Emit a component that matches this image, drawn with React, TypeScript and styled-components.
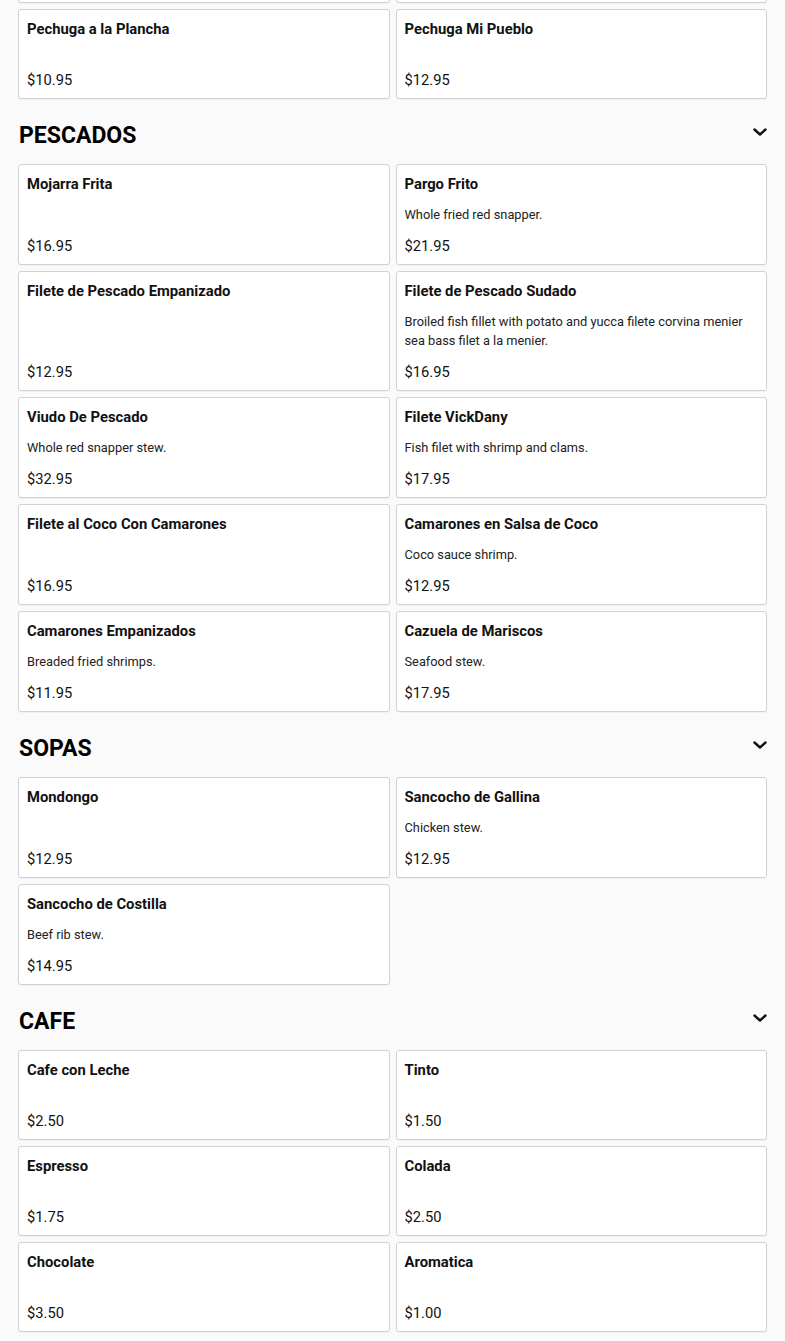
import React from 'react';
import styled, { createGlobalStyle } from 'styled-components';

const GlobalStyle = createGlobalStyle`
  html, body {
    margin: 0;
    padding: 0;
    background: #fafafa;
    font-family: Roboto, 'Liberation Sans', Arial, sans-serif;
    color: #111;
  }
  * {
    box-sizing: border-box;
  }
`;

const Page = styled.div`
  padding: 0 18px 20px;
  overflow: hidden;
`;

const Section = styled.section`
  display: flex;
  flex-direction: column;
`;

const SectionHeader = styled.div`
  display: flex;
  align-items: center;
  justify-content: space-between;
  height: 28px;
  margin: 23px 0 14px;
  padding-left: 1px;
`;

const SectionTitle = styled.h2`
  margin: 0;
  font-size: 23px;
  line-height: 28px;
  font-weight: 700;
  color: #000;
`;

const Chevron = styled.svg`
  width: 16px;
  height: 16px;
  margin-top: -8px;
  margin-right: -1px;
`;

const Grid = styled.div<{ $cut?: boolean }>`
  display: grid;
  grid-template-columns: 1fr 1fr;
  column-gap: 6px;
  row-gap: 6px;
  margin-top: ${(p) => (p.$cut ? '-87px' : '0')};
`;

const Card = styled.div<{ $blank?: boolean }>`
  display: flex;
  flex-direction: column;
  min-height: ${(p) => (p.$blank ? '90px' : '0')};
  padding: 9px 8px 8px;
  background: #fff;
  border: 1px solid #d2d2d2;
  border-radius: 3px;
  box-shadow: 0 1px 1px rgba(0, 0, 0, 0.04);
`;

const ItemName = styled.div`
  font-size: 14.8px;
  line-height: 20px;
  font-weight: 700;
  color: #111;
`;

const ItemDesc = styled.p`
  margin: 11px 0 12px;
  min-height: 8px;
  font-size: 12.8px;
  line-height: 19px;
  color: #222;
`;

const ItemPrice = styled.div`
  margin-top: auto;
  font-size: 14.7px;
  line-height: 20px;
  color: #111;
`;

type Item = { name: string; desc?: string; price: string };
type Category = { title: string; items: Item[] };

const menu: Category[] = [
  {
    title: 'PESCADOS',
    items: [
      { name: 'Mojarra Frita', price: '$16.95' },
      { name: 'Pargo Frito', desc: 'Whole fried red snapper.', price: '$21.95' },
      { name: 'Filete de Pescado Empanizado', price: '$12.95' },
      {
        name: 'Filete de Pescado Sudado',
        desc: 'Broiled fish fillet with potato and yucca filete corvina menier sea bass filet a la menier.',
        price: '$16.95',
      },
      { name: 'Viudo De Pescado', desc: 'Whole red snapper stew.', price: '$32.95' },
      { name: 'Filete VickDany', desc: 'Fish filet with shrimp and clams.', price: '$17.95' },
      { name: 'Filete al Coco Con Camarones', price: '$16.95' },
      { name: 'Camarones en Salsa de Coco', desc: 'Coco sauce shrimp.', price: '$12.95' },
      { name: 'Camarones Empanizados', desc: 'Breaded fried shrimps.', price: '$11.95' },
      { name: 'Cazuela de Mariscos', desc: 'Seafood stew.', price: '$17.95' },
    ],
  },
  {
    title: 'SOPAS',
    items: [
      { name: 'Mondongo', price: '$12.95' },
      { name: 'Sancocho de Gallina', desc: 'Chicken stew.', price: '$12.95' },
      { name: 'Sancocho de Costilla', desc: 'Beef rib stew.', price: '$14.95' },
    ],
  },
  {
    title: 'CAFE',
    items: [
      { name: 'Cafe con Leche', price: '$2.50' },
      { name: 'Tinto', price: '$1.50' },
      { name: 'Espresso', price: '$1.75' },
      { name: 'Colada', price: '$2.50' },
      { name: 'Chocolate', price: '$3.50' },
      { name: 'Aromatica', price: '$1.00' },
    ],
  },
];

const MenuCard: React.FC<{ item: Item }> = ({ item }) => (
  <Card>
    <ItemName>{item.name}</ItemName>
    <ItemDesc>{item.desc}</ItemDesc>
    <ItemPrice>{item.price}</ItemPrice>
  </Card>
);

const ChevronDown = () => (
  <Chevron viewBox="0 0 16 16" fill="none">
    <path d="M2.5 5.5 L8 10.5 L13.5 5.5" stroke="#111" strokeWidth="2.4" strokeLinecap="round" strokeLinejoin="round" />
  </Chevron>
);

export default function App() {
  return (
    <Page>
      <GlobalStyle />
      <Grid $cut>
        <Card $blank />
        <Card $blank />
        <MenuCard item={{ name: 'Pechuga a la Plancha', price: '$10.95' }} />
        <MenuCard item={{ name: 'Pechuga Mi Pueblo', price: '$12.95' }} />
      </Grid>
      {menu.map((cat) => (
        <Section key={cat.title}>
          <SectionHeader>
            <SectionTitle>{cat.title}</SectionTitle>
            <ChevronDown />
          </SectionHeader>
          <Grid>
            {cat.items.map((item) => (
              <MenuCard key={item.name} item={item} />
            ))}
          </Grid>
        </Section>
      ))}
    </Page>
  );
}
